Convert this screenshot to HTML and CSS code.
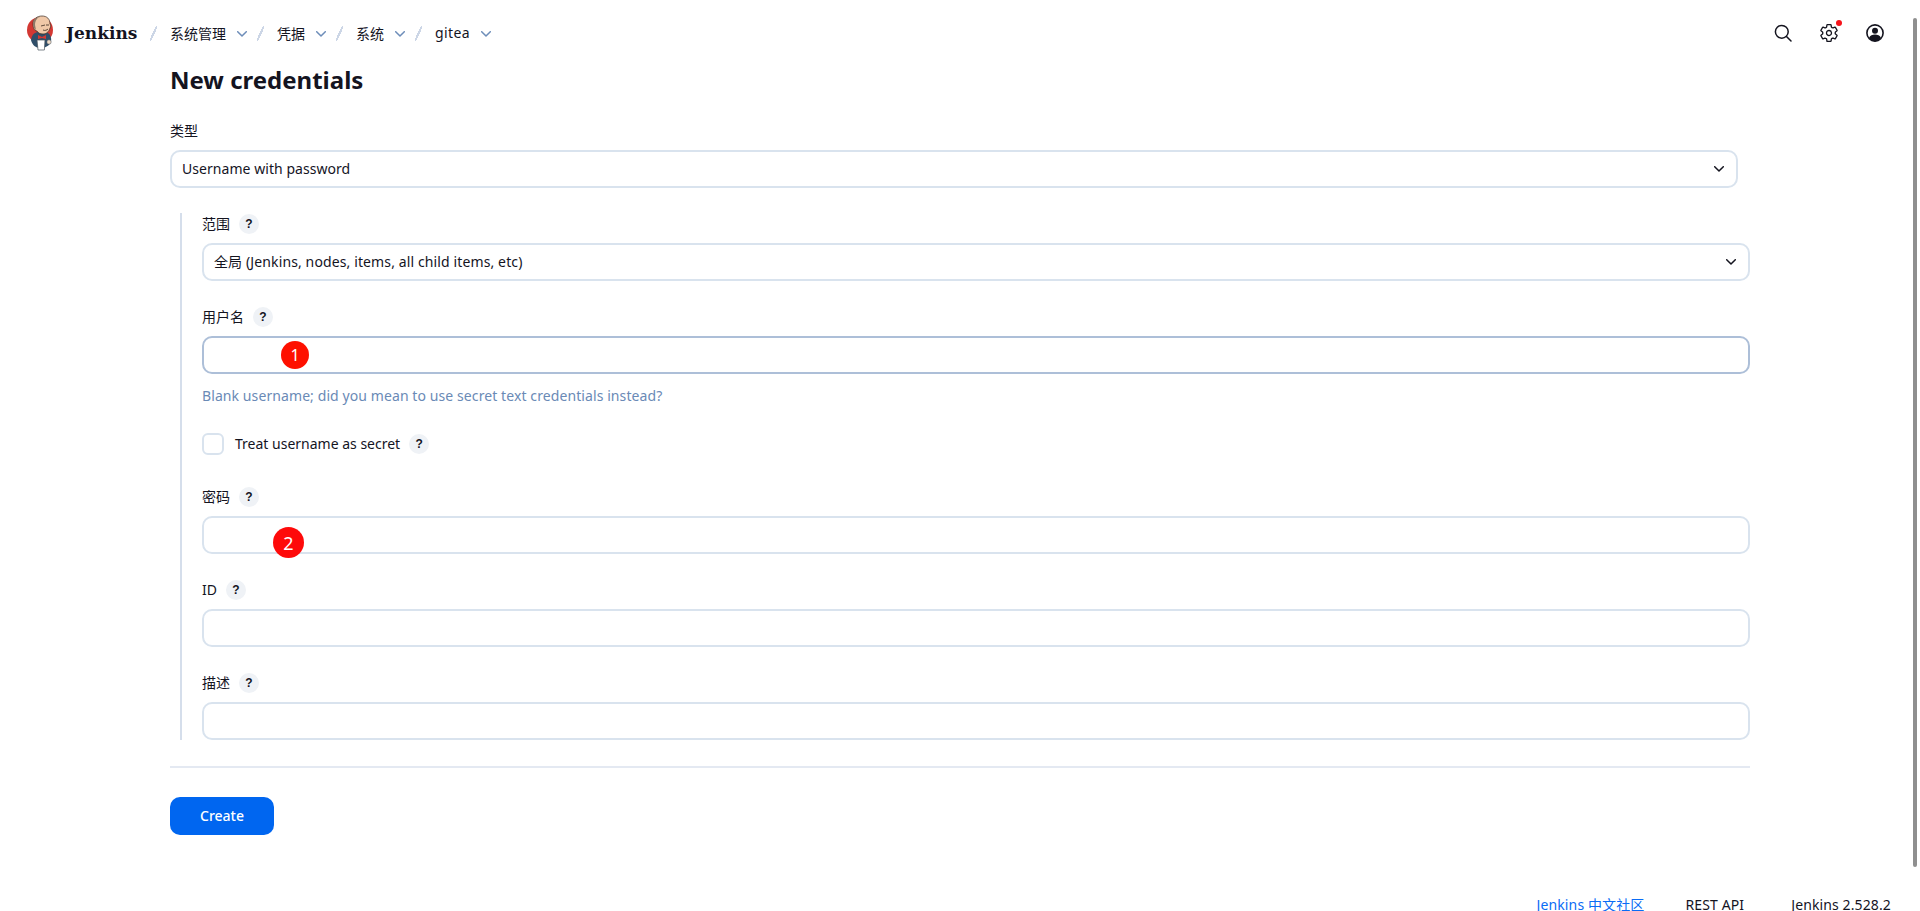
FILE: index.html
```html
<!DOCTYPE html>
<html lang="zh-CN">
<head>
<meta charset="utf-8">
<title>New credentials - Jenkins</title>
<link rel="stylesheet" href="styles.css">
</head>
<body>
<header class="topbar">
  <a class="brand">
    <svg class="logo" viewBox="0 0 28 36" width="28" height="36">
      <circle cx="14" cy="15" r="13" fill="#d33833"/>
      <path d="M5 25c1-6 4-8 8-8l9 1c3 2 3.500 6 3 9-2 4-6 6-11 6-4 0-8-3-9-8z" fill="#2f4e69"/>
      <path d="M7 9c0-5 4-8 9-8s8 3 8 8c1 1 1 3 0 4-1 4-4 6-7 6-3 0-5-1-6-3-3 0-4-4-4-7z" fill="#f0c8a8" stroke="#3a2a20" stroke-width=".7"/>
      <path d="M9 10C9 5 12 2 14 2c-4 0-7 2-7 7 0 2 1 5 3 6z" fill="#8d7868"/>
      <path d="M15 11l4-1M20 10l3 0M17 15c2 1 4 0 5-1" fill="none" stroke="#3a2a20" stroke-width=".8"/>
      <path d="M12 20l4 2 4-2v4l-4-1-4 1z" fill="#d33833"/>
      <path d="M11 25h8l-.6 10H12z" fill="#fff" stroke="#49535c" stroke-width=".7"/>
      <circle cx="23" cy="27" r="2.200" fill="#f0dcc8" stroke="#49535c" stroke-width=".5"/>
    </svg>
    <span class="brand-name">Jenkins</span>
  </a>
  <nav class="crumbs">
    <span class="sep"></span><span class="crumb">系统管理</span>
    <svg class="chev" viewBox="0 0 10 6" width="10" height="6"><path d="M.7.7 5 5 9.300.7"/></svg>
    <span class="sep"></span><span class="crumb">凭据</span>
    <svg class="chev" viewBox="0 0 10 6" width="10" height="6"><path d="M.7.7 5 5 9.300.7"/></svg>
    <span class="sep"></span><span class="crumb">系统</span>
    <svg class="chev" viewBox="0 0 10 6" width="10" height="6"><path d="M.7.7 5 5 9.300.7"/></svg>
    <span class="sep"></span><span class="crumb crumb-latin">gitea</span>
    <svg class="chev" viewBox="0 0 10 6" width="10" height="6"><path d="M.7.7 5 5 9.300.7"/></svg>
  </nav>
  <div class="actions">
    <svg class="act" viewBox="0 0 18 18" width="18" height="18"><circle cx="7.800" cy="7.800" r="6.400" fill="none" stroke="#14141f" stroke-width="1.500"/><path d="M12.500 12.500 17 17" stroke="#14141f" stroke-width="1.500" stroke-linecap="round"/></svg>
    <span class="gear-wrap">
      <svg class="act" viewBox="0 0 512 512" width="20" height="20"><path d="M262.290 192.310a64 64 0 1057.400 57.400 64.130 64.130 0 00-57.400-57.400zM416.390 256a154.340 154.340 0 01-1.530 20.790l45.210 35.460a10.810 10.810 0 012.450 13.750l-42.770 74a10.810 10.810 0 01-13.140 4.590l-44.900-18.080a16.110 16.110 0 00-15.170 1.750A164.480 164.480 0 01325 400.800a15.940 15.940 0 00-8.820 12.140l-6.730 47.890a11.080 11.080 0 01-10.680 9.170h-85.540a11.110 11.110 0 01-10.690-8.870l-6.720-47.820a16.070 16.070 0 00-9-12.220 155.300 155.300 0 01-21.460-12.570 16 16 0 00-15.110-1.710l-44.890 18.070a10.810 10.810 0 01-13.140-4.580l-42.770-74a10.800 10.800 0 012.450-13.750l38.210-30a16.050 16.050 0 006-14.080c-.36-4.170-.58-8.330-.58-12.500s.21-8.270.58-12.350a16 16 0 00-6.070-13.940l-38.190-30A10.810 10.810 0 0149.480 186l42.770-74a10.810 10.810 0 0113.140-4.590l44.900 18.080a16.110 16.110 0 0015.170-1.750A164.480 164.480 0 01187 111.200a15.940 15.940 0 008.820-12.140l6.730-47.890A11.080 11.080 0 01213.230 42h85.540a11.110 11.110 0 0110.690 8.870l6.720 47.820a16.070 16.070 0 009 12.220 155.300 155.300 0 0121.460 12.570 16 16 0 0015.110 1.710l44.890-18.070a10.810 10.810 0 0113.140 4.580l42.770 74a10.800 10.800 0 01-2.450 13.750l-38.210 30a16.050 16.050 0 00-6.050 14.080c.33 4.140.55 8.300.55 12.470z" fill="none" stroke="#14141f" stroke-width="34" stroke-linejoin="round"/></svg>
      <span class="dot"></span>
    </span>
    <svg class="act" viewBox="0 0 18 18" width="18" height="18"><circle cx="9" cy="9" r="8.100" fill="#fff" stroke="#14141f" stroke-width="1.600"/><circle cx="9" cy="6.800" r="3" fill="#14141f"/><path d="M3 14c1-2.500 3.500-3.400 6-3.400s5 .9 6 3.400c-1.500 2-3.700 3.200-6 3.200S4.500 16 3 14z" fill="#14141f"/></svg>
  </div>
</header>

<main class="page">
  <h1 class="title">New credentials</h1>
  <form class="form">
    <div class="type-field">
      <div class="label-row"><label class="label">类型</label></div>
      <div class="select-wrap">
        <select class="control select select-type"><option>Username with password</option></select>
        <svg class="select-chev" viewBox="0 0 10 6" width="10" height="6"><path d="M.7.7 5 5 9.300.7"/></svg>
      </div>
    </div>
    <div class="group">
      <div class="field">
        <div class="label-row"><label class="label">范围</label><span class="help">?</span></div>
        <div class="select-wrap">
          <select class="control select select-scope"><option>全局 (Jenkins, nodes, items, all child items, etc)</option></select>
          <svg class="select-chev" viewBox="0 0 10 6" width="10" height="6"><path d="M.7.7 5 5 9.300.7"/></svg>
        </div>
      </div>
      <div class="field field-user">
        <div class="label-row"><label class="label">用户名</label><span class="help">?</span></div>
        <div class="input-wrap">
          <input class="control control-focus" type="text">
          <span class="marker marker-one">1</span>
        </div>
        <p class="hint">Blank username; did you mean to use secret text credentials instead?</p>
      </div>
      <div class="check-row">
        <span class="checkbox"></span>
        <span class="check-label">Treat username as secret</span>
        <span class="help">?</span>
      </div>
      <div class="field">
        <div class="label-row"><label class="label">密码</label><span class="help">?</span></div>
        <div class="input-wrap">
          <input class="control" type="password">
          <span class="marker marker-two">2</span>
        </div>
      </div>
      <div class="field">
        <div class="label-row"><label class="label">ID</label><span class="help">?</span></div>
        <input class="control" type="text">
      </div>
      <div class="field field-last">
        <div class="label-row"><label class="label">描述</label><span class="help">?</span></div>
        <input class="control" type="text">
      </div>
    </div>
    <hr class="rule">
    <button class="create" type="button">Create</button>
  </form>
</main>

<footer class="footer">
  <a class="foot-link">Jenkins 中文社区</a>
  <span class="foot-item">REST API</span>
  <span class="foot-item foot-version">Jenkins 2.528.2</span>
</footer>

<div class="scrollbar"></div>
</body>
</html>
```

FILE: styles.css
```css
* { box-sizing: border-box; }
html, body { height: 911px; }
body {
  margin: 0;
  overflow: hidden;
  background: #fff;
  color: #14141f;
  font-family: "Noto Sans", "Noto Sans CJK SC", sans-serif;
  font-size: 14px;
  line-height: 20px;
}
.topbar {
  height: 66px;
  display: flex;
  align-items: center;
  padding-left: 26px;
  padding-right: 36px;
}
.brand { display: flex; align-items: center; }
.logo { display: block; margin-top: -1px; }
.brand-name {
  margin-left: 12px;
  width: 72px;
  font-family: "DejaVu Serif", serif;
  font-weight: 700;
  font-size: 17px;
  color: #14141f;
}
.crumbs { display: flex; align-items: center; margin-left: 12px; }
.sep {
  width: 7px; height: 15px; margin-right: 13px;
  background: linear-gradient(to bottom right, transparent 42%, #ccd6e6 42%, #ccd6e6 58%, transparent 58%);
}
.crumb { color: #14141f; font-family: "Noto Sans CJK SC", "Noto Sans", sans-serif; font-size: 14px; }
.crumb-latin { font-family: "Noto Sans", sans-serif; letter-spacing: .4px; }
.chev { margin: 1px 10.500px 0 10.500px; }
.chev path { fill: none; stroke: #6d8db9; stroke-width: 1.5; stroke-linecap: round; stroke-linejoin: round; }
.actions { margin-left: auto; display: flex; align-items: center; gap: 27px; }
.act { display: block; }
.gear-wrap { position: relative; display: block; }
.dot {
  position: absolute; right: -3px; top: -3px;
  width: 6px; height: 6px; border-radius: 50%; background: #f6131a;
}
.page { padding-left: 170px; width: 1750px; }
.title {
  margin: 0 0 27px;
  font-size: 24px;
  line-height: 28px;
  font-weight: 700;
  color: #14141f;
}
.label-row { display: flex; align-items: center; gap: 9px; height: 20px; margin-bottom: 9px; }
.label { font-family: "Noto Sans", "Noto Sans CJK SC", sans-serif; font-size: 14px; line-height: 20px; }
.help {
  width: 20px; height: 20px; border-radius: 50%;
  background: #eff2f6;
  display: flex; align-items: center; justify-content: center;
  font-family: "Liberation Sans", sans-serif;
  font-size: 12px; font-weight: 700; color: #14141f;
}
.type-field { margin-right: 12px; margin-bottom: 25px; }
.control {
  display: block;
  width: 100%;
  height: 38px;
  border: 2px solid #d9e3ee;
  border-radius: 10px;
  background: #fff;
  padding: 0 10px;
  font: inherit;
  color: #14141f;
  outline: none;
}
.control-focus { border-color: #adbfd8; }
.select { appearance: none; -webkit-appearance: none; }
.select-type { letter-spacing: .05px; }
.select-scope { letter-spacing: .12px; }
.select-wrap { position: relative; }
.select-chev { position: absolute; right: 14px; top: 16px; }
.select-chev path { fill: none; stroke: #14141f; stroke-width: 1.5; stroke-linecap: round; stroke-linejoin: round; }
.group {
  margin-left: 10px;
  padding-left: 20px;
  padding-top: 1px;
  border-left: 2px solid #d5deeb;
}
.field { margin-bottom: 26px; }
.field-last { margin-bottom: 0; }
.field-user { margin-bottom: 0; }
.input-wrap { position: relative; }
.marker {
  position: absolute;
  border-radius: 50%;
  background: #fe1000;
  color: #fff;
  display: flex; align-items: center; justify-content: center;
}
.marker-one { left: 79px; top: 5px; width: 28px; height: 28px; font-size: 16px; }
.marker-two { left: 71px; top: 11px; width: 31px; height: 31px; font-size: 18px; background: #fe0a0a; }
.hint { margin: 12px 0 0; color: #6a8ab6; font-size: 14px; line-height: 20px; letter-spacing: .09px; }
.check-row { display: flex; align-items: center; height: 22px; margin-top: 27px; margin-bottom: 32px; }
.checkbox { width: 22px; height: 22px; border: 2px solid #d9e3ee; border-radius: 6px; background: #fff; }
.check-label { margin-left: 11px; margin-right: 9px; }
.rule { border: 0; height: 2px; background: #e4e9f2; margin: 26px 0 29px; }
.create {
  display: block;
  width: 104px; height: 38px;
  border: 0; border-radius: 10px;
  background: #0066f0;
  color: #fff;
  font: inherit;
  font-weight: 500;
}
.footer {
  display: flex; justify-content: flex-end; align-items: center; gap: 41px;
  padding-right: 29px;
  margin-top: 60px;
  height: 20px;
  letter-spacing: .12px;
}
.foot-link { color: #0a6cf5; font-family: "Noto Sans", "Noto Sans CJK SC", sans-serif; }
.foot-item { color: #14141f; }
.foot-version { margin-left: 6px; }
.scrollbar {
  position: absolute; left: 1913px; top: 18px;
  width: 4px; height: 849px;
  background: #8f8f8f; border-radius: 2px;
}
```
